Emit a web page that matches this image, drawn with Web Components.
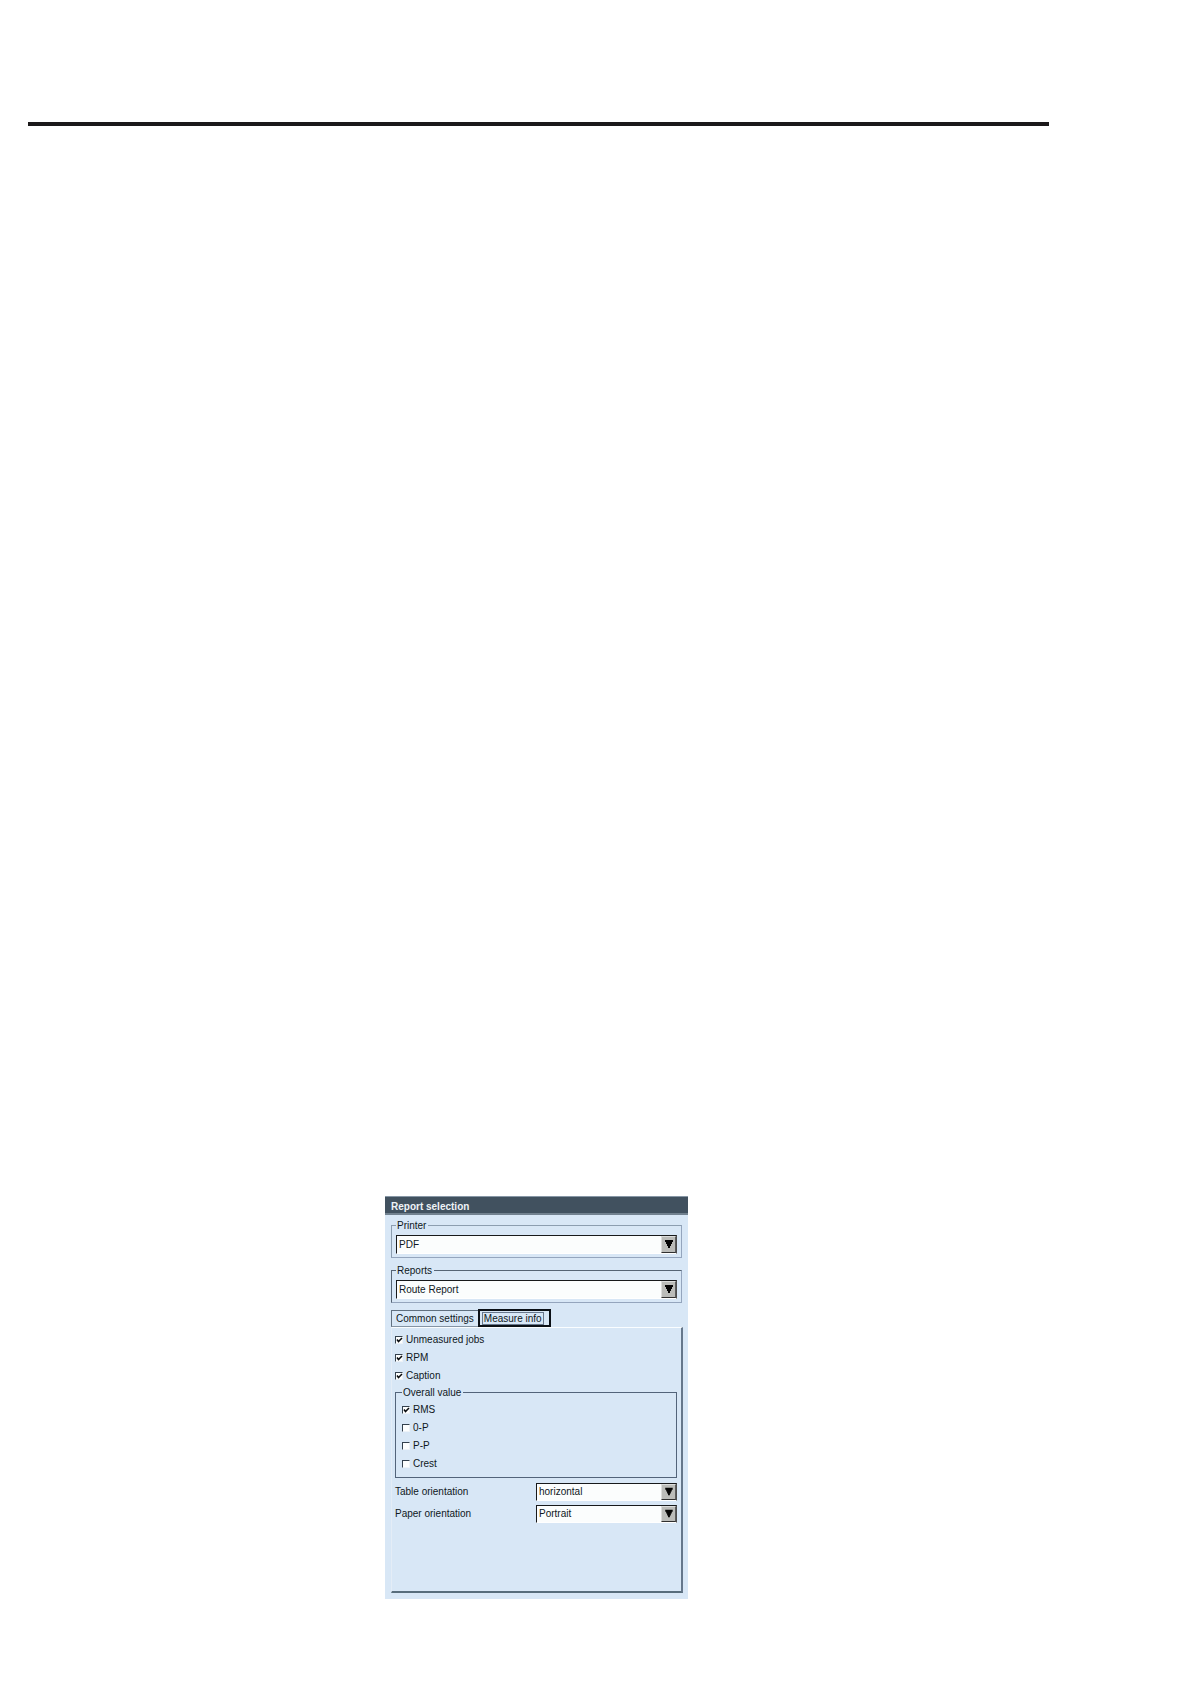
<!DOCTYPE html>
<html lang="en">
<head>
<meta charset="utf-8">
<title>Report selection</title>
<style>
html, body { margin: 0; background: #fff; }
</style>
</head>
<body>
<manual-page>
  <report-dialog heading="Report selection">
    <group-box caption="Printer"><drop-down name="Printer" choice="PDF"></drop-down></group-box>
    <group-box caption="Reports" class="dark"><drop-down name="Reports" choice="Route Report"></drop-down></group-box>
    <tab-panel>
      <check-option checked>Unmeasured jobs</check-option>
      <check-option checked>RPM</check-option>
      <check-option checked>Caption</check-option>
      <group-box caption="Overall value" class="list">
        <check-option checked>RMS</check-option>
        <check-option>0-P</check-option>
        <check-option>P-P</check-option>
        <check-option>Crest</check-option>
      </group-box>
      <drop-down label="Table orientation" choice="horizontal"></drop-down>
      <drop-down label="Paper orientation" choice="Portrait"></drop-down>
    </tab-panel>
  </report-dialog>
</manual-page>
<script>
class Base extends HTMLElement {
  connectedCallback() {
    if (this.shadowRoot) return;
    this.attachShadow({ mode: 'open' }).innerHTML = '<style>*{box-sizing:border-box}</style>' + this.view();
  }
}

customElements.define('manual-page', class extends Base {
  view() {
    return `<style>
      :host { display: block; font: 10px/12px "Liberation Sans", Arial, sans-serif; color: #0f1722; }
      main { display: flex; flex-direction: column; justify-content: space-between; min-height: 100vh; padding: 122px 142px 85px 28px; }
      hr { align-self: stretch; height: 4px; margin: 0; border: 0; background: #1b191a; }
      section { padding-left: 357px; }
    </style>
    <main><hr><section><slot></slot></section></main>`;
  }
});

customElements.define('report-dialog', class extends Base {
  view() {
    return `<style>
      :host { display: block; max-width: 303px; background: #d8e7f6; }
      h1 { margin: 0; height: 19px; padding: 4px 6px 0; font-size: 10px; line-height: 12px; color: #eef3f7;
        background: #41515f; border-top: 1px solid #8797a6; border-bottom: 2px solid #71818f; }
      .body { display: flex; flex-direction: column; padding: 4px 5px 6px 6px; }
    </style>
    <h1>${this.getAttribute('heading')}</h1>
    <div class="body"><slot></slot></div>`;
  }
});

customElements.define('group-box', class extends Base {
  view() {
    return `<style>
      :host { display: block; margin: 0 1px 6px 0; --edge: #8c9eb0; --low: #94a5bd; }
      :host(.dark) { --edge: #566575; }
      :host(.list) { margin: 1px 0 3px; --edge: #53647a; --low: #53647a; }
      fieldset { min-width: 0; margin: 0; padding: 3px 4px 3px; border: 1px solid var(--low);
        border-top-color: var(--edge); border-left-color: var(--edge); }
      legend { height: 13px; padding: 0 2px 0 1px; line-height: 13px; }
      :host(.list) fieldset { padding: 2px 6px 4px; }
    </style>
    <fieldset><legend>${this.getAttribute('caption')}</legend><slot></slot></fieldset>`;
  }
});

customElements.define('drop-down', class extends Base {
  view() {
    const label = this.getAttribute('label');
    const choice = this.getAttribute('choice');
    return `<style>
      :host { display: block; }
      .row { display: flex; align-items: center; }
      .row label { flex: 1; }
      .box { flex: 1; display: grid; grid-template-columns: 1fr 15px; height: 19px;
        border: 1px solid #fff; border-top-color: #17191b; border-left-color: #17191b; border-right-color: #4d4d4d; background: #fbfdfd; }
      .labelled { height: 22px; }
      .labelled .box { flex: 0 0 141px; height: 18px; }
      select { grid-area: 1 / 1 / 2 / 3; width: 100%; margin: 0; padding: 0 18px 0 2px; border: 0; background: none;
        appearance: none; font: inherit; color: inherit; outline: 0; }
      svg { grid-area: 1 / 2; width: 15px; height: 100%; pointer-events: none; background: #bbbcb9;
        border: 1px solid #dcdddc; border-right-color: #5c5c5c; border-bottom-color: #303030; }
    </style>
    <div class="row ${label ? 'labelled' : ''}">
      ${label ? `<label for="s">${label}</label>` : ''}
      <div class="box">
        <select id="s" ${label ? '' : `aria-label="${this.getAttribute('name')}"`}><option>${choice}</option></select>
        <svg viewBox="0 0 13 15" aria-hidden="true"><path d="M3 3h8v2H10v2H9v2H8v2H6V9H5V7H4V5H3z" fill="#050505"/></svg>
      </div>
    </div>`;
  }
});

customElements.define('check-option', class extends Base {
  view() {
    return `<style>
      :host { display: block; height: 18px; }
      label { display: flex; align-items: center; gap: 3px; height: 18px; }
      .box { display: grid; width: 8px; height: 8px; }
      input { grid-area: 1 / 1; appearance: none; width: 8px; height: 8px; margin: 0; background: #fdfefe;
        border: 1px solid #eef3f8; border-top-color: #33404d; border-left-color: #33404d; }
      svg { grid-area: 1 / 1; width: 8px; height: 8px; pointer-events: none; visibility: hidden; }
      input:checked + svg { visibility: visible; }
    </style>
    <label><span class="box"><input type="checkbox" ${this.hasAttribute('checked') ? 'checked' : ''}>
      <svg viewBox="0 0 8 8" aria-hidden="true"><path d="M2 3.5l1.5 2L7 2" fill="none" stroke="#080b0e" stroke-width="1.5"/></svg></span><slot></slot></label>`;
  }
});

customElements.define('tab-panel', class extends Base {
  view() {
    return `<style>
      :host { display: block; }
      nav { display: flex; align-items: flex-end; height: 18px; }
      button { margin: 0; padding: 0 4px; height: 17px; border: 1px solid #607080; border-bottom-color: #8493a3; border-right: 0; background: none;
        font: inherit; color: inherit; white-space: nowrap; }
      button.on { height: 18px; padding: 0 5px 0 2px; border: 2px solid #0b1016; }
      .on span { display: block; height: 13px; padding: 0 1px; border: 1px solid #68788d; line-height: 11px; }
      section { min-height: 266px; padding: 3px 4px 0 3px; border: 1px solid #e4edf7; border-top-color: #fafdff;
        border-right: 2px solid #65778b; border-bottom: 2px solid #586d7c; }
    </style>
    <nav role="tablist"><button role="tab">Common settings</button><button role="tab" class="on" aria-selected="true"><span>Measure info</span></button></nav>
    <section role="tabpanel"><slot></slot></section>`;
  }
});
</script>
</body>
</html>
